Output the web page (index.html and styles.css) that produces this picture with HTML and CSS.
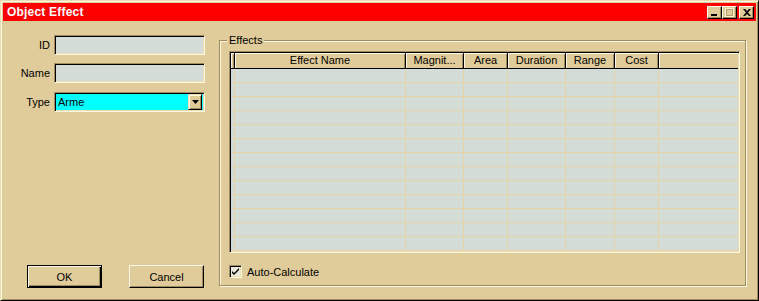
FILE: index.html
```html
<!DOCTYPE html>
<html lang="en">
<head>
    <meta charset="UTF-8">
    <title>Object Effect</title>
    <link rel="stylesheet" href="styles.css">
</head>
<body>
    <div class="window">
        <div class="titlebar">
            <span class="title">Object Effect</span>
            <div class="tbuttons">
                <span class="tbtn"><svg width="8" height="7" viewBox="0 0 8 7"><rect x="0" y="5" width="6" height="2" fill="#000"/></svg></span>
                <span class="tbtn"><svg width="9" height="9" viewBox="0 0 9 9"><rect x="0.5" y="0.5" width="8" height="8" fill="none" stroke="#fff4d8"/><rect x="1.5" y="1.5" width="6" height="6" fill="none" stroke="#b8a070"/></svg></span>
                <span class="tbtn close"><svg width="8" height="7" viewBox="0 0 8 7"><path d="M0 0h2l2 2 2-2h2L5 3.5 8 7H6L4 5 2 7H0l3-3.5z" fill="#000"/></svg></span>
            </div>
        </div>

        <div class="content">
            <div class="left">
                <div class="form">
                    <label>ID</label>
                    <div class="field"></div>
                    <label>Name</label>
                    <div class="field"></div>
                    <label>Type</label>
                    <div class="combo">
                        <span class="combo-value">Arme</span>
                        <span class="combo-btn"><svg width="7" height="4" viewBox="0 0 7 4"><path d="M0 0h7L3.5 4z" fill="#000"/></svg></span>
                    </div>
                </div>
                <div class="actions">
                    <div class="btn default"><span>OK</span></div>
                    <div class="btn"><span>Cancel</span></div>
                </div>
            </div>

            <div class="group">
                <span class="legend">Effects</span>
                <div class="list">
                    <div class="row head">
                        <div class="cell"></div>
                        <div class="cell">Effect Name</div>
                        <div class="cell">Magnit...</div>
                        <div class="cell">Area</div>
                        <div class="cell">Duration</div>
                        <div class="cell">Range</div>
                        <div class="cell">Cost</div>
                        <div class="cell last"></div>
                    </div>
                    <div class="rows" id="rows"></div>
                </div>
                <div class="check">
                    <span class="box"><svg width="9" height="9" viewBox="0 0 9 9"><path d="M1 4l2 2 5-5v2L3 8 1 6z" fill="#000"/></svg></span>
                    <span>Auto-Calculate</span>
                </div>
            </div>
        </div>
    </div>

    <script>
        let rows = document.getElementById("rows");
        for (let i = 0; i < 13; i++) {
            let row = `<div class="row">
                <div class="cell"></div><div class="cell"></div><div class="cell"></div>
                <div class="cell"></div><div class="cell"></div><div class="cell"></div>
                <div class="cell"></div><div class="cell last"></div>
            </div>`;
            rows.innerHTML += row;
        }
    </script>
</body>
</html>
```

FILE: styles.css
```css
body {
    margin: 0;
    font-family: "Liberation Sans", Arial, sans-serif;
    font-size: 11px;
    color: #000;
    background: #e0cc9a;
}
.window {
    width: 759px;
    height: 301px;
    box-sizing: border-box;
    border: 1px solid;
    border-color: #ecdcb0 #000 #000 #ecdcb0;
    box-shadow: inset 1px 1px 0 #fff8e4, inset -1px -1px 0 #a08c5c;
    padding: 2px;
    background: #e0cc9a;
    display: flex;
    flex-direction: column;
}
.titlebar {
    height: 18px;
    background: #ff0000;
    display: flex;
    align-items: center;
    justify-content: space-between;
    padding: 0 2px 0 4px;
    flex-shrink: 0;
}
.title {
    color: #fff;
    font-weight: bold;
    font-size: 12px;
    letter-spacing: 0.2px;
}
.tbuttons {
    display: flex;
    gap: 0;
}
.tbtn {
    width: 15px;
    height: 13px;
    box-sizing: border-box;
    background: #e0cc9a;
    border: 1px solid;
    border-color: #fff8e4 #000 #000 #fff8e4;
    box-shadow: inset -1px -1px 0 #a08c5c;
    display: flex;
    align-items: center;
    justify-content: center;
}
.tbtn.close {
    margin-left: 2px;
}
.content {
    flex: 1;
    display: flex;
}
.left {
    width: 216px;
    display: flex;
    flex-direction: column;
    padding-bottom: 10px;
}
.form {
    margin-top: 14px;
    display: grid;
    grid-template-columns: 47px 151px;
    column-gap: 4px;
    row-gap: 8px;
    align-items: center;
}
.form label {
    text-align: right;
}
.field, .combo {
    height: 20px;
    box-sizing: border-box;
    border: 1px solid;
    border-color: #a08c5c #fff8e4 #fff8e4 #a08c5c;
    box-shadow: inset 1px 1px 0 #000, inset -1px -1px 0 #ecdcb0;
    background: #d4dcd8;
}
.combo {
    margin-top: 1px;
    background: #00ffff;
    display: flex;
    align-items: center;
    padding: 2px;
}
.combo-value {
    flex: 1;
    padding-left: 1px;
}
.combo-btn {
    width: 14px;
    height: 16px;
    box-sizing: border-box;
    background: #e0cc9a;
    border: 1px solid;
    border-color: #ecdcb0 #000 #000 #ecdcb0;
    box-shadow: inset 1px 1px 0 #fff8e4, inset -1px -1px 0 #a08c5c;
    display: flex;
    align-items: center;
    justify-content: center;
}
.actions {
    margin-top: auto;
    display: flex;
    gap: 27px;
    padding-left: 24px;
}
.btn {
    width: 75px;
    height: 23px;
    box-sizing: border-box;
    border: 1px solid;
    border-color: #fff8e4 #000 #000 #fff8e4;
    box-shadow: inset -1px -1px 0 #a08c5c;
    display: flex;
    align-items: center;
    justify-content: center;
}
.btn.default {
    border: 1px solid #000;
    box-shadow: inset 1px 1px 0 #fff8e4, inset -1px -1px 0 #000, inset -2px -2px 0 #a08c5c;
}
.group {
    position: relative;
    width: 527px;
    height: 246px;
    box-sizing: border-box;
    margin-top: 19px;
    border: 1px solid #a08c5c;
    border-color: #a08c5c #a08c5c #a08c5c #a08c5c;
    box-shadow: inset 1px 1px 0 #fff8e4, 1px 1px 0 #fff8e4;
    padding: 10px 0 0 9px;
}
.legend {
    position: absolute;
    top: -7px;
    left: 7px;
    padding: 0 2px;
    background: #e0cc9a;
    line-height: 13px;
}
.list {
    width: 511px;
    height: 202px;
    box-sizing: border-box;
    border: 1px solid;
    border-color: #a08c5c #fff8e4 #fff8e4 #a08c5c;
    box-shadow: inset 1px 1px 0 #000, inset -1px -1px 0 #ecdcb0;
    padding: 1px;
    background: #d4dcd8;
    overflow: hidden;
}
.row {
    display: grid;
    grid-template-columns: 4px 171px 58px 44px 58px 49px 44px 1fr;
    height: 14px;
    box-sizing: border-box;
    border-bottom: 1px solid #e6d3a6;
}
.row .cell {
    border-right: 1px solid #e6d3a6;
}
.row .cell.last {
    border-right: none;
}
.row.head {
    height: 16px;
    background: #e0cc9a;
    border-bottom: 1px solid #000;
}
.row.head .cell {
    border-right: 1px solid #000;
    box-shadow: inset 1px 1px 0 #fff8e4, inset -1px 0 0 #a08c5c;
    text-align: center;
    line-height: 15px;
    white-space: nowrap;
    overflow: hidden;
}
.row.head .cell.last {
    border-right: none;
    box-shadow: inset 1px 1px 0 #fff8e4;
}
.check {
    margin-top: 12px;
    display: flex;
    align-items: center;
    gap: 5px;
}
.box {
    width: 13px;
    height: 13px;
    box-sizing: border-box;
    border: 1px solid;
    border-color: #a08c5c #fff8e4 #fff8e4 #a08c5c;
    box-shadow: inset 1px 1px 0 #000, inset -1px -1px 0 #ecdcb0;
    background: #ece8dc;
    display: flex;
    align-items: center;
    justify-content: center;
}
```
